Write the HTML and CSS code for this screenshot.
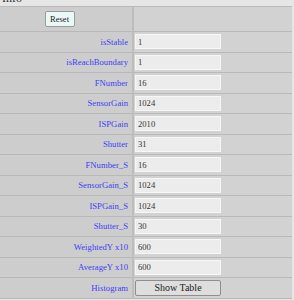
FILE: index.html
```html
<!DOCTYPE html>
<html lang="en">
<head>
  <meta charset="UTF-8">
  <title>Info</title>
  <link rel="stylesheet" href="styles.css">
</head>
<body>

  <!-- Info panel -->
  <div class="info">
    <div class="legend">Info</div>
    <table class="info-table">
      <tr class="head-row">
        <td class="label"><button class="reset-btn">Reset</button></td>
        <td class="value"></td>
      </tr>
      <tr><td class="label">isStable</td><td class="value"><input type="text" value="1"></td></tr>
      <tr><td class="label">isReachBoundary</td><td class="value"><input type="text" value="1"></td></tr>
      <tr><td class="label">FNumber</td><td class="value"><input type="text" value="16"></td></tr>
      <tr><td class="label">SensorGain</td><td class="value"><input type="text" value="1024"></td></tr>
      <tr><td class="label">ISPGain</td><td class="value"><input type="text" value="2010"></td></tr>
      <tr><td class="label">Shutter</td><td class="value"><input type="text" value="31"></td></tr>
      <tr><td class="label">FNumber_S</td><td class="value"><input type="text" value="16"></td></tr>
      <tr><td class="label">SensorGain_S</td><td class="value"><input type="text" value="1024"></td></tr>
      <tr><td class="label">ISPGain_S</td><td class="value"><input type="text" value="1024"></td></tr>
      <tr><td class="label">Shutter_S</td><td class="value"><input type="text" value="30"></td></tr>
      <tr><td class="label">WeightedY x10</td><td class="value"><input type="text" value="600"></td></tr>
      <tr><td class="label">AverageY x10</td><td class="value"><input type="text" value="600"></td></tr>
      <tr><td class="label">Histogram</td><td class="value"><button class="table-btn">Show Table</button></td></tr>
    </table>
  </div>

</body>
</html>
```

FILE: styles.css
```css
/* General */
* {
  box-sizing: border-box;
}

body {
  margin: 0;
  background-color: #e6e6e6;
  font-family: "Liberation Serif", "Times New Roman", serif;
  overflow: hidden;
}

/* Panel title, cut by the top of the window */
.legend {
  margin-top: -9px;
  height: 15px;
  line-height: 14px;
  padding-left: 2px;
  font-size: 12px;
  color: #333;
}

/* Table */
.info-table {
  border-collapse: collapse;
  margin-left: -13px;
  border-top: 1px solid #bababa;
}

.info-table td {
  height: 20.5px;
  padding: 0;
  border-bottom: 1px solid #b8b8b8;
  background-color: #d2d2d2;
}

.info-table td.label {
  width: 146px;
  padding-right: 4px;
  text-align: right;
  font-size: 8.7px;
  color: #3f3ff5;
  background-color: #cdcdcd;
  border-right: 2px solid #bdbdbd;
}

.info-table td.value {
  width: 159px;
  padding-left: 1px;
}

.head-row td {
  height: 25px;
}

.head-row td.label {
  text-align: center;
  padding: 0;
}

/* Inputs */
.value input {
  display: block;
  width: 86px;
  height: 15px;
  padding: 0 2px;
  border: 1px solid #f7f7f7;
  background-color: #ececec;
  font-family: "Liberation Serif", serif;
  font-size: 8.6px;
  color: #333;
}

/* Buttons */
.reset-btn {
  width: 30px;
  height: 16px;
  padding: 0;
  border: 1px solid #9a9a9a;
  border-radius: 2px;
  background-color: #eaf8f8;
  font-family: "Liberation Serif", serif;
  font-size: 8.6px;
  color: #222;
}

.table-btn {
  display: block;
  width: 86px;
  height: 16px;
  padding: 0;
  border: 1px solid #8e8e8e;
  border-radius: 2px;
  background-color: #dedede;
  font-family: "Liberation Serif", serif;
  font-size: 10px;
  color: #222;
}
```
